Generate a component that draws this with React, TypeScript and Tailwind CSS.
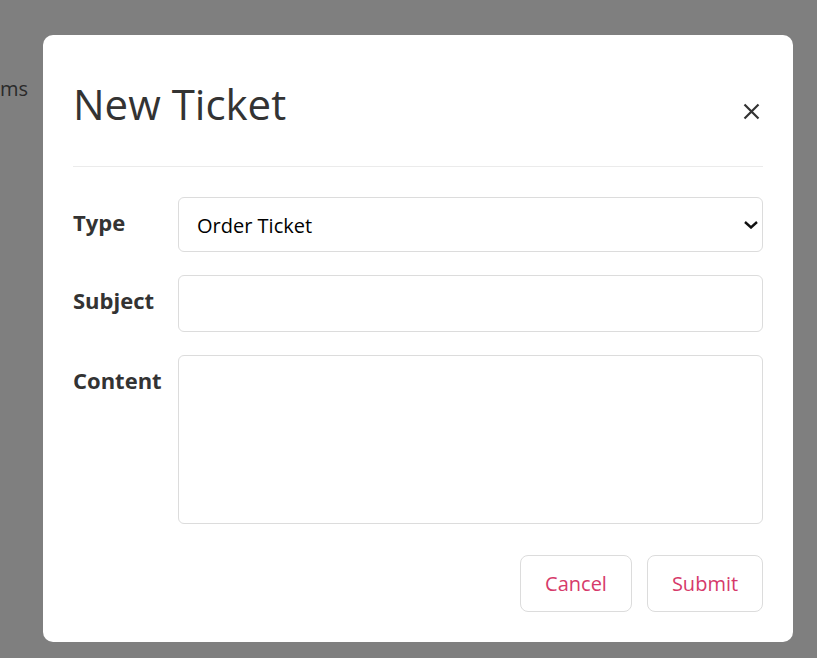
import React from 'react';

const font = { fontFamily: '"Open Sans", "Noto Sans", sans-serif' };

const NewTicketModal: React.FC = () => {
  return (
    <div className="absolute left-[43px] top-[35px] w-[750px] rounded-[10px] bg-white px-[30px] pt-[39px] pb-[30px] text-[#333]">
      <div className="flex items-start justify-between">
        <h1 className="text-[42px] leading-[60px] font-normal">New Ticket</h1>
        <button className="mt-[29px] mr-[3px] text-[#333]">
          <svg width="17" height="17" viewBox="0 0 17 17" fill="none" stroke="currentColor" strokeWidth="2.2">
            <path d="M1.5 1.5 15.5 15.5M15.5 1.5 1.5 15.5" />
          </svg>
        </button>
      </div>

      <div className="mt-[32px] h-px bg-[#ebebeb]" />

      <form className="mt-[30px] flex flex-col gap-[23px]">
        <div className="flex">
          <label className="w-[105px] pt-[10px] text-[22px] leading-[30px] font-bold">Type</label>
          <div className="relative flex-1">
            <select className="h-[55px] w-full appearance-none rounded-[6px] border border-[#dcdcdc] bg-white pl-[18px] pt-[3px] text-[20px] text-black outline-none">
              <option>Order Ticket</option>
            </select>
            <svg className="pointer-events-none absolute right-[5px] top-[24px]" width="14" height="8" viewBox="0 0 14 8" fill="none" stroke="#111" strokeWidth="2.4">
              <path d="M1 1l6 5.5L13 1" />
            </svg>
          </div>
        </div>

        <div className="flex">
          <label className="w-[105px] pt-[10px] text-[22px] leading-[30px] font-bold">Subject</label>
          <input className="h-[57px] flex-1 rounded-[6px] border border-[#dcdcdc] px-[18px] text-[20px] outline-none" />
        </div>

        <div className="flex">
          <label className="w-[105px] pt-[10px] text-[22px] leading-[30px] font-bold">Content</label>
          <textarea className="h-[169px] flex-1 resize-none rounded-[6px] border border-[#dcdcdc] px-[18px] py-[12px] text-[20px] outline-none" />
        </div>
      </form>

      <div className="mt-[31px] flex justify-end gap-[15px]">
        <button className="h-[57px] w-[112px] rounded-[8px] border border-[#dcdcdc] bg-white pt-[1px] text-[20px] text-[#d63a6a]">
          Cancel
        </button>
        <button className="h-[57px] w-[116px] rounded-[8px] border border-[#dcdcdc] bg-white pt-[1px] text-[20px] text-[#d63a6a]">
          Submit
        </button>
      </div>
    </div>
  );
};

const App: React.FC = () => {
  return (
    <div className="relative h-[658px] w-[817px] overflow-hidden bg-white" style={font}>
      <div className="pt-[76px] text-[20px] leading-[26px] text-[#555]">ms</div>
      <div className="absolute inset-0 bg-black/50" />
      <NewTicketModal />
    </div>
  );
};

export default App;
